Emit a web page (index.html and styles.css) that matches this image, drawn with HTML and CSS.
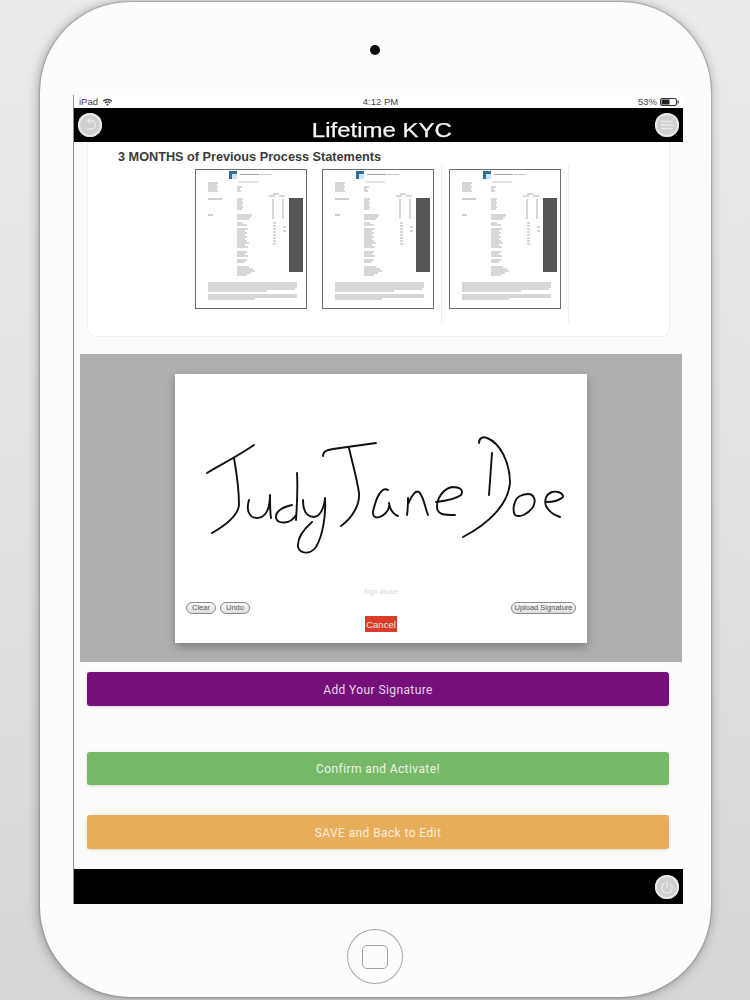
FILE: index.html
```html
<!DOCTYPE html>
<html lang="en">
<head>
<meta charset="utf-8">
<title>Lifetime KYC</title>
<link rel="stylesheet" href="styles.css">
</head>
<body>
<svg class="defs" width="0" height="0" aria-hidden="true">
  <symbol id="doc" viewBox="0 0 110 138">
    <rect x="33" y="1" width="8" height="8" fill="#2f6f9f"/>
    <rect x="36" y="4" width="5" height="5" fill="#cfe4f0"/>
    <path class="ln" d="M44 4.500H63"/><path class="ln lt" d="M64 4.500H76"/>
    <path class="ln lt" d="M42 12H62"/>
    <path class="tx" d="M12 13H22M12 15H21M12 17H22M12 19H21M12 21H22"/>
    <path class="tx" d="M41 17H46M41 19H44M41 21H45"/>
    <path class="ln" d="M12 29H26"/>
    <path class="tx" d="M41 29H47M41 31H46M41 33H47M41 35H46M41 37H47M41 39H46"/>
    <path class="tx" d="M77 24H83M73 26H79M83 26H89M77 29V49M87 29V49"/>
    <path class="ln" d="M12 45H17"/>
    <path class="tx" d="M41 45H56M41 47H55M41 49H53"/>
    <path class="tx" d="M41 53H47M41 55H51M41 59H52M41 61H49M41 63H51M41 65H49M41 67H51M41 69H49M41 71H51M41 73H53M41 75H49M41 77H52"/>
    <path class="tx" d="M77 53H80M77 56H80M77 59H80M77 62H80M77 65H80M77 68H80M77 71H80M77 74H80M87 57H90M87 61H90"/>
    <path class="tx" d="M41 82H51M41 84H49M41 86H52M41 90H51M41 92H49"/>
    <path class="tx" d="M41 97H53M41 99H57M41 101H59M41 103H55M41 105H51"/>
    <rect x="93" y="28" width="14" height="74" fill="#555"/>
    <path class="tx" d="M12 113H101M12 115H101M12 117H101M12 119H99M12 121H71"/>
    <path class="tx" d="M12 125H101M12 127H101M12 129H59"/>
  </symbol>
</svg>
<div class="device">
  <div class="bezel-top"><span class="speaker"></span></div>
  <div class="screen">
    <div class="status">
      <span class="status-left">iPad
        <svg class="wifi" viewBox="0 0 12 9"><path d="M0.5 3A8 8 0 0 1 11.500 3L10.300 4.300A6.200 6.200 0 0 0 1.700 4.300ZM2.500 5.100A5 5 0 0 1 9.500 5.100L8.400 6.300A3.400 3.400 0 0 0 3.600 6.300ZM4.500 7.200A2.200 2.200 0 0 1 7.500 7.200L6 8.800Z"/></svg>
      </span>
      <span class="status-time">4:12 PM</span>
      <span class="status-right">53%
        <svg class="battery" viewBox="0 0 19 8"><rect x="0.500" y="0.500" width="16" height="7" rx="1.500" fill="none" stroke="#333"/><rect x="1.500" y="1.500" width="8" height="5" fill="#222"/><rect x="17.500" y="2.500" width="1.200" height="3" fill="#333"/></svg>
      </span>
    </div>
    <header class="bar top-bar">
      <span class="round-icon">
        <svg viewBox="0 0 24 24"><path class="ico" d="M10 8H13.500A4 4 0 0 1 13.500 16H10M10 8L12 6M10 8L12 10"/></svg>
      </span>
      <h1 class="title">Lifetime KYC</h1>
      <span class="round-icon">
        <svg viewBox="0 0 24 24"><path class="ico" d="M6.500 8.500H17.500M6 12H18M6.500 15.500H17.500"/></svg>
      </span>
    </header>
    <main class="content">
      <section class="card">
        <h2 class="heading">3 MONTHS of Previous Process Statements</h2>
        <div class="docs">
          <div class="doc-cell first"><div class="doc"><svg class="doc-page"><use href="#doc"/></svg></div></div>
          <div class="doc-cell"><div class="doc"><svg class="doc-page"><use href="#doc"/></svg></div></div>
          <div class="doc-cell"><div class="doc"><svg class="doc-page"><use href="#doc"/></svg></div></div>
        </div>
      </section>
      <section class="panel">
        <div class="sign-card">
          <svg class="signature" viewBox="175 374 412 210">
            <path d="M207 473C222 464 238 456 254 445"/>
            <path d="M234 458C237 475 239 490 239 505C238 516 226 525 212 533"/>
            <path d="M249 500C246 510 249 518 257 518C265 518 270 510 270 495C270 505 270 512 271 518"/>
            <path d="M297 473C298 490 297 505 296 520M292 505C282 507 275 512 276 518C278 524 290 525 296 515"/>
            <path d="M303 500C303 510 306 517 314 517C321 516 324 507 325 498C326 515 323 535 316 547C310 555 300 554 298 547C297 538 304 529 312 522"/>
            <path d="M323 456C323 451 327 450 333 449C348 447 362 445 376 443"/>
            <path d="M349 448C352 462 357 478 359 493C360 505 352 518 341 526"/>
            <path d="M388 490C382 486 376 497 373 512C372 520 382 519 388 510C389 507 390 504 389 503C390 510 393 514 398 516"/>
            <path d="M407 515C408 508 408 503 408 498C408 505 408 504 409 502C412 495 416 490 419 492C424 497 425 508 428 515"/>
            <path d="M436 502C445 501 456 499 461 495C464 490 460 487 452 487C443 489 437 498 437 507C437 515 445 515 455 515"/>
            <path d="M492 453C491 468 490 482 489 495"/>
            <path d="M479 443C479 438 483 436 487 438C500 443 510 462 510 483C508 505 488 524 463 537"/>
            <path d="M520 496C514 499 512 510 515 515C520 518 528 514 533 507C537 499 533 494 528 494C525 494 522 495 520 496Z"/>
            <path d="M546 502C553 502 560 500 563 497C563 492 556 491 552 492C546 494 544 500 546 506C549 512 554 515 560 517"/>
          </svg>
          <div class="sign-hint">Sign above</div>
          <div class="sign-actions">
            <div class="pill-group"><span class="pill pill-clear">Clear</span><span class="pill pill-undo">Undo</span></div>
            <span class="pill pill-upload">Upload Signature</span>
          </div>
          <span class="cancel">Cancel</span>
        </div>
      </section>
      <div class="btn btn-purple">Add Your Signature</div>
      <div class="btn btn-green">Confirm and Activate!</div>
      <div class="btn btn-orange">SAVE and Back to Edit</div>
    </main>
    <footer class="bar bottom-bar">
      <span class="round-icon">
        <svg viewBox="0 0 24 24"><path class="ico" d="M9 8.500A5.300 5.300 0 1 0 15 8.500M12 6.500V12"/></svg>
      </span>
    </footer>
  </div>
  <div class="bezel-bottom">
    <span class="home"><span class="home-inner"></span></span>
  </div>
</div>
</body>
</html>
```

FILE: styles.css
```css
* { box-sizing: border-box; }
html, body { margin: 0; padding: 0; }
body {
  width: 750px;
  height: 1000px;
  overflow: hidden;
  background: linear-gradient(180deg, #ebebed 0%, #e2e2e4 50%, #d6d6d8 100%);
  font-family: "Liberation Sans", Arial, sans-serif;
  padding: 2px 0 0 40px;
}
.defs { position: absolute; }
.device {
  width: 671px;
  height: 995px;
  background: #fdfcfd;
  border-radius: 90px;
  box-shadow: 0 0 2px #555, -1px 1px 12px rgba(0, 0, 0, .35);
  display: flex;
  flex-direction: column;
}
.bezel-top {
  height: 93px;
  display: flex;
  justify-content: center;
  padding: 43px 1px 0 0;
}
.speaker {
  width: 10px;
  height: 10px;
  border-radius: 50%;
  background: #0a0a0a;
}
.screen {
  margin-left: 33px;
  width: 610px;
  height: 809px;
  background: #fbfbfb;
  border-left: 1px solid #8c8c8c;
  display: flex;
  flex-direction: column;
}
.status {
  height: 13px;
  background: #fff;
  display: grid;
  grid-template-columns: 1fr auto 1fr;
  align-items: center;
  padding: 0 4px 0 5px;
  font-size: 9.5px;
  color: #444;
}
.status-left, .status-right { display: flex; align-items: center; gap: 4px; }
.status-right { justify-content: flex-end; gap: 3px; }
.status-time { padding-left: 3px; }
.wifi { width: 11px; height: 8px; fill: #444; }
.battery { width: 19px; height: 8px; }
.bar { background: #000; display: flex; align-items: center; flex: none; }
.top-bar { height: 34px; padding: 0 4px; justify-content: space-between; }
.title {
  margin: 0;
  padding: 10px 0 0 5px;
  color: #f6f6f6;
  font-size: 20px;
  font-weight: 400;
  line-height: 24px;
  -webkit-text-stroke: .25px #f6f6f6;
  transform: scaleX(1.2);
}
.round-icon {
  width: 24px;
  height: 24px;
  border-radius: 50%;
  background: #d0d0d0;
  box-shadow: inset 0 0 0 2px #e8e8e8;
  display: block;
}
.round-icon svg { width: 24px; height: 24px; display: block; }
.ico { fill: none; stroke: #e8e8e8; stroke-width: 1.4; stroke-linecap: round; }
.content { flex: 1; display: flex; flex-direction: column; }
.card {
  margin-left: 13px;
  width: 583px;
  height: 195px;
  background: #fff;
  border: 1px solid #f0f0f0;
  border-top: 0;
  border-radius: 0 0 9px 9px;
  padding: 7px 0 0 30px;
}
.heading {
  margin: 0;
  font-size: 12.7px;
  line-height: 16px;
  font-weight: 700;
  color: #3a3a3a;
}
.docs { display: flex; padding-left: 70px; }
.doc-cell {
  width: 127px;
  height: 158px;
  padding: 4px 7px 0;
  border-right: 1px solid #eeeeee;
}
.doc-cell.first { border-right-color: transparent; }
.doc {
  width: 112px;
  height: 140px;
  border: 1px solid #707070;
  background: #fff;
}
.doc-page {
  width: 110px;
  height: 138px;
  display: block;
  filter: blur(.6px);
}
.ln { stroke: #a0a0a0; stroke-width: 1; fill: none; }
.ln.lt { stroke: #c8c8c8; }
.tx { stroke: #a6a6a6; stroke-width: .9; fill: none; }
.panel {
  margin: 17px 0 0 6px;
  width: 602px;
  height: 308px;
  background: #b0aeb0;
  padding: 20px 0 0 95px;
}
.sign-card {
  width: 412px;
  height: 269px;
  background: #fff;
  box-shadow: 0 4px 9px rgba(0, 0, 0, .28);
  display: flex;
  flex-direction: column;
  align-items: center;
}
.signature {
  width: 412px;
  height: 210px;
  display: block;
  fill: none;
  stroke: #111;
  stroke-width: 1.9;
  stroke-linecap: round;
  stroke-linejoin: round;
}
.sign-hint { height: 16px; line-height: 16px; font-size: 7px; color: #dcdcdc; }
.sign-actions {
  width: 100%;
  margin-top: 2px;
  padding: 0 11px;
  display: flex;
  justify-content: space-between;
}
.pill-group { display: flex; gap: 4px; }
.pill {
  height: 12px;
  line-height: 10px;
  border: 1px solid #8a8a8a;
  border-radius: 6px;
  background: linear-gradient(180deg, #fafafa, #dedede);
  font-size: 7.5px;
  color: #555;
  text-align: center;
  display: block;
}
.pill-clear, .pill-undo { width: 30px; }
.pill-upload { width: 65px; }
.cancel {
  margin-top: 2px;
  width: 32px;
  height: 16px;
  line-height: 17px;
  background: #dc3a2a;
  color: #fbe6e2;
  font-size: 9.5px;
  text-align: center;
}
.btn {
  margin-left: 13px;
  width: 582px;
  border-radius: 3px;
  text-align: center;
  font-family: Roboto, "Liberation Sans", sans-serif;
  font-size: 12px;
  letter-spacing: .4px;
  box-shadow: 0 1px 3px rgba(0, 0, 0, .14);
}
.btn-purple { margin-top: 10px; height: 34px; line-height: 36px; background: #75107a; color: #e9d6ea; }
.btn-green { margin-top: 46px; height: 33px; line-height: 35px; background: #76b768; color: #eef6ea; }
.btn-orange { margin-top: 30px; height: 34px; line-height: 36px; background: #e8ad5a; color: #fbeedd; }
.bottom-bar { height: 35px; justify-content: flex-end; padding-right: 4px; }
.bezel-bottom { flex: 1; display: flex; justify-content: center; padding: 25px 1px 0 0; }
.home {
  width: 56px;
  height: 55px;
  border: 1px solid #a8a8a8;
  border-radius: 50%;
  display: flex;
  align-items: center;
  justify-content: center;
}
.home-inner {
  width: 26px;
  height: 24px;
  border: 1px solid #a0a0a0;
  border-radius: 5px;
}
```
